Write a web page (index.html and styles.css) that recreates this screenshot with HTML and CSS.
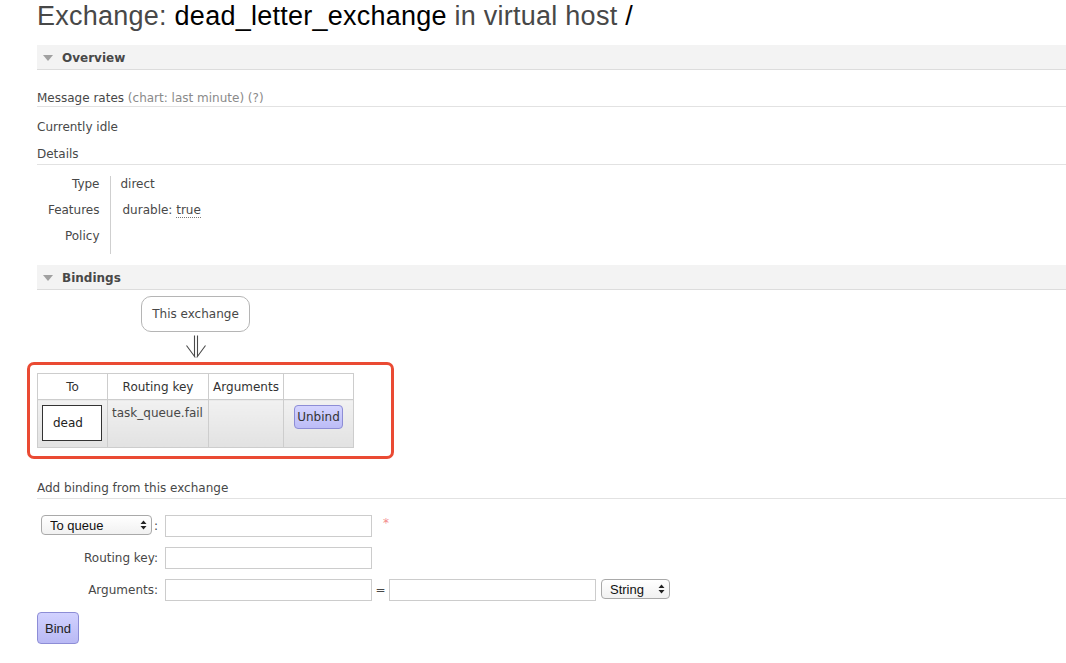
FILE: index.html
```html
<!DOCTYPE html>
<html>
<head>
<meta charset="utf-8">
<title>Exchange: dead_letter_exchange</title>
<link rel="stylesheet" href="styles.css">
</head>
<body>
<div class="page">
  <h1>Exchange: <b>dead_letter_exchange</b> in virtual host <b>/</b></h1>

  <div class="bar"><span class="tri"></span>Overview</div>
  <div class="sub first">Message rates <span class="grey">(chart: last minute) (?)</span></div>
  <div class="idle">Currently idle</div>
  <div class="sub">Details</div>
  <table class="facts">
    <tr><th>Type</th><td>direct</td></tr>
    <tr><th>Features</th><td><span class="feat">durable: <abbr>true</abbr></span></td></tr>
    <tr><th>Policy</th><td></td></tr>
  </table>

  <div class="bar bar2"><span class="tri"></span>Bindings</div>
  <div class="bindings">
    <div class="this-ex">This exchange</div>
    <svg class="arrow" width="22" height="24" viewBox="0 0 22 24">
      <path d="M9.5 0.5 V21.5 M12.5 0.5 V21.5 M1.5 10.5 L10.3 22.5 M20.5 10.5 L11.7 22.5" fill="none" stroke="#4a4a4a" stroke-width="1.1"/>
    </svg>
    <div class="hl-wrap">
      <table class="bind">
        <tr><th class="c1">To</th><th class="c2">Routing key</th><th class="c3">Arguments</th><th class="c4"></th></tr>
        <tr>
          <td><span class="queue">dead</span></td>
          <td>task_queue.fail</td>
          <td></td>
          <td class="act"><button class="unbind">Unbind</button></td>
        </tr>
      </table>
      <div class="highlight"></div>
    </div>
  </div>

  <div class="sub add">Add binding from this exchange</div>
  <table class="form">
    <tr>
      <th><span class="sel sel-q"><select><option>To queue</option></select><svg class="updown" width="7" height="10" viewBox="0 0 7 10"><path d="M0.5 4 L3.5 0.5 L6.5 4 Z M0.5 6 L3.5 9.5 L6.5 6 Z" fill="#222"/></svg></span>:</th>
      <td><input type="text"><span class="req">*</span></td>
    </tr>
    <tr>
      <th>Routing key:</th>
      <td><input type="text"></td>
    </tr>
    <tr>
      <th>Arguments:</th>
      <td><input type="text"><span class="eq">=</span><input type="text"><span class="sel sel-s"><select><option>String</option></select><svg class="updown" width="7" height="10" viewBox="0 0 7 10"><path d="M0.5 4 L3.5 0.5 L6.5 4 Z M0.5 6 L3.5 9.5 L6.5 6 Z" fill="#222"/></svg></span></td>
    </tr>
  </table>
  <button class="bindbtn">Bind</button>
</div>
</body>
</html>
```

FILE: styles.css
```css
* { box-sizing: border-box; }
body {
  margin: 0;
  background: #fff;
  color: #484848;
  font: 12px "DejaVu Sans", Verdana, sans-serif;
}
.page { padding-left: 37px; }

h1 {
  margin: 0;
  height: 45px;
  padding-top: 1px;
  font: normal 27px/30px "Liberation Sans", Arial, sans-serif;
  letter-spacing: 0.25px;
  color: #484848;
}
h1 b { font-weight: normal; color: #000; }

.bar {
  height: 25px;
  display: flex;
  align-items: center;
  gap: 9px;
  padding-left: 6px;
  padding-top: 1px;
  background: #f3f3f3;
  border-bottom: 1px solid #dcdcdc;
  font-weight: bold;
  color: #484848;
}
.tri {
  width: 0; height: 0;
  border-left: 5px solid transparent;
  border-right: 5px solid transparent;
  border-top: 6px solid #a0a0a0;
}
.bar2 { margin-top: 11px; }

.sub {
  margin-top: 11px;
  line-height: 16px;
  padding-bottom: 2px;
  border-bottom: 1px solid #e2e2e2;
}
.sub.first { margin-top: 19px; padding-top: 1px; padding-bottom: 0; }
.sub.add { margin-top: 32px; }
.grey { color: #8a8a8a; }
.idle { margin-top: 11px; line-height: 16px; padding-top: 1px; }

.facts { border-collapse: collapse; margin-top: 11px; }
.facts th {
  width: 73px;
  text-align: right;
  font-weight: normal;
  line-height: 14px;
  padding: 1px 10px 11px 0;
  border-right: 1px solid #cfcfcf;
}
.facts td { line-height: 14px; padding: 1px 0 11px 10px; }
.feat { margin-left: 2px; }
abbr { text-decoration: none; border-bottom: 1px dotted #777; }

.bindings {
  display: inline-flex;
  flex-direction: column;
  align-items: center;
  margin-top: 6px;
}
.this-ex {
  height: 36px;
  line-height: 35px;
  padding: 0 10px;
  border: 1px solid #b5b5b5;
  border-radius: 10px;
  background: #fff;
}
.arrow { display: block; margin-top: 3px; }
.hl-wrap { position: relative; margin-top: 14px; }

.bind { border-collapse: collapse; table-layout: fixed; width: 316px; }
.bind th, .bind td { border: 1px solid #cdcdcd; }
.bind th {
  height: 26px;
  padding: 0 1px;
  font-weight: normal;
  background: #fff;
  color: #333;
}
.bind .c1 { width: 70px; }
.bind .c2 { width: 101px; }
.bind .c3 { width: 75px; }
.bind .c4 { width: 70px; }
.bind td {
  height: 48px;
  vertical-align: top;
  padding: 5px 3px 5px 4px;
  line-height: 16px;
  background: linear-gradient(#f1f1f1, #e2e2e2);
}
.bind td.act { text-align: center; padding: 5px 0 0; }
.queue {
  display: block;
  width: 60px;
  height: 36px;
  line-height: 35px;
  padding-left: 10px;
  border: 1px solid #333;
  background: #fff;
  color: #222;
}
.unbind {
  height: 24px;
  width: 49px;
  padding: 0;
  font: 12px "DejaVu Sans", Verdana, sans-serif;
  color: #333;
  background: linear-gradient(#d4d4ff, #bcbcf6);
  border: 1px solid #8d8dd6;
  border-radius: 4px;
}
.highlight {
  position: absolute;
  left: -10px;
  top: -11px;
  width: 367px;
  height: 97px;
  border: 3px solid #ea4a33;
  border-radius: 7px;
  pointer-events: none;
}

.form { border-collapse: collapse; margin-top: 16px; }
.form th {
  width: 128px;
  padding: 0 7px 10px 0;
  text-align: right;
  font-weight: normal;
  white-space: nowrap;
  vertical-align: middle;
}
.form td { padding: 0 0 10px 0; white-space: nowrap; vertical-align: middle; }
.form input {
  width: 207px;
  height: 22px;
  margin: 0;
  border: 1px solid #cccccc;
  vertical-align: middle;
}
.req { color: #f38a8a; margin-left: 11px; position: relative; top: -3px; vertical-align: middle; }
.eq { display: inline-block; width: 17px; text-align: center; vertical-align: middle; }

.sel { position: relative; display: inline-block; vertical-align: middle; }
.sel select {
  appearance: none;
  -webkit-appearance: none;
  height: 20px;
  margin: 0;
  padding: 0 0 0 8px;
  font: 13px "Liberation Sans", Arial, sans-serif;
  color: #111;
  background: linear-gradient(#ffffff, #f1f1f1);
  border: 1px solid #a9a9a9;
  border-radius: 4px;
  display: block;
}
.sel-q select { width: 111px; }
.sel-q { margin-right: 2px; top: -1px; }
.sel-s { margin-left: 5px; top: -1px; }
.sel-s select { width: 69px; }
.updown { position: absolute; right: 5px; top: 5px; }

.bindbtn {
  display: block;
  width: 42px;
  height: 32px;
  margin-top: 1px;
  padding: 0;
  font: 13px "Liberation Sans", Arial, sans-serif;
  color: #222;
  background: linear-gradient(#d2d2ff, #b9b9f4);
  border: 1px solid #8d8dd6;
  border-radius: 4px;
}
```
